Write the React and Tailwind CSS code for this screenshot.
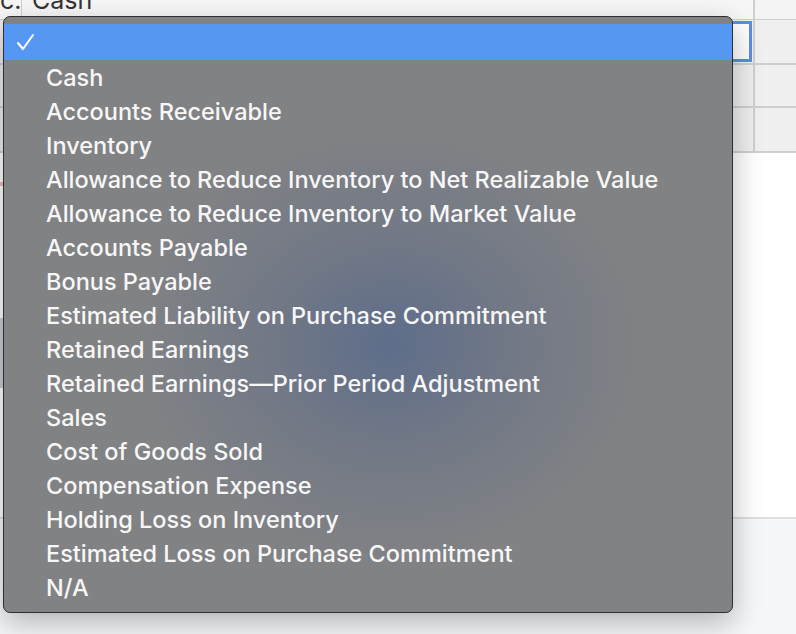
const options = [
    "Cash",
    "Accounts Receivable",
    "Inventory",
    "Allowance to Reduce Inventory to Net Realizable Value",
    "Allowance to Reduce Inventory to Market Value",
    "Accounts Payable",
    "Bonus Payable",
    "Estimated Liability on Purchase Commitment",
    "Retained Earnings",
    "Retained Earnings\u2014Prior Period Adjustment",
    "Sales",
    "Cost of Goods Sold",
    "Compensation Expense",
    "Holding Loss on Inventory",
    "Estimated Loss on Purchase Commitment",
    "N/A",
];

const font = { fontFamily: 'Inter, "Noto Sans", sans-serif' };

const App = () => {
    return (
        <div className="relative w-[796px] h-[634px] overflow-hidden bg-white flex flex-col" style={font}>
            {/* <!-- table behind the menu --> */}
            <div className="flex h-[20px] border-b border-[#cfcfcf] bg-[#f7f7f7]">
                <div className="w-[22px] border-r border-[#d0d0d0] overflow-hidden">
                    <div className="-mt-[15px] text-[25px] leading-[30px] text-[#333]">c.</div>
                </div>
                <div className="flex-1 overflow-hidden pl-[10px]">
                    <div className="-mt-[15px] text-[25px] leading-[30px] text-[#333]">Cash</div>
                </div>
                <div className="w-[43px] border-l-2 border-[#cfcfcf] bg-[#f4f4f4]"></div>
            </div>
            <div className="flex h-[45px] border-b-2 border-[#cfcfcf]">
                <div className="w-[22px] bg-[#ececec]"></div>
                <div className="flex-1 flex items-center bg-[#f2f2f2]">
                    <div className="ml-auto mr-[1px] w-[200px] h-[41px] border-[3px] border-[#5b8fe3] bg-white"></div>
                </div>
                <div className="w-[43px] border-l-2 border-[#cfcfcf] bg-[#f0f0f0]"></div>
            </div>
            <div className="flex h-[43px] border-b-2 border-[#cfcfcf]">
                <div className="w-[22px] bg-[#ececec]"></div>
                <div className="flex-1 bg-[#efefef]"></div>
                <div className="w-[43px] border-l-2 border-[#cfcfcf] bg-[#f0f0f0]"></div>
            </div>
            <div className="flex h-[45px] border-b-2 border-[#cfcfcf]">
                <div className="w-[22px] bg-[#ececec]"></div>
                <div className="flex-1 bg-[#efefef]"></div>
                <div className="w-[43px] border-l-2 border-[#cfcfcf] bg-[#f0f0f0]"></div>
            </div>
            <div className="flex-1 flex flex-col">
                <div className="h-[29px]"></div>
                <div className="w-[3px] h-[4px] bg-[#f3b8b8]"></div>
                <div className="h-[132px]"></div>
                <div className="w-[3px] h-[70px] bg-[#c6cdd5]"></div>
            </div>
            <div className="h-[117px] border-t-2 border-[#dedede] bg-[#f6f7f9]"></div>

            {/* <!-- open select menu --> */}
            <div className="absolute left-[3px] top-[16px] w-[730px] h-[597px] rounded-[7px] border border-[#2f2f2f] overflow-hidden shadow-[0_10px_30px_rgba(0,0,0,0.28)] bg-[#818181] bg-[radial-gradient(ellipse_260px_220px_at_53%_55%,#5e6d8a_0%,#717886_45%,#818284_100%)]">
                <div className="pt-[7px] pb-[8px] flex flex-col">
                    <div className="h-[36px] bg-[#5797f4] flex items-center pl-[12px]">
                        <svg width="19" height="18" viewBox="0 0 19 18">
                            <polyline points="2,10 7,16 17,2" fill="none" stroke="white" strokeWidth="2.1" strokeLinecap="round" strokeLinejoin="round" />
                        </svg>
                    </div>
                    {options.map((o) => (
                        <div key={o} className="h-[34px] flex items-center pt-[2px] pl-[42px] text-[23.5px] font-medium text-[#f7f7f7] whitespace-nowrap">
                            {o}
                        </div>
                    ))}
                </div>
            </div>
        </div>
    );
};

export default App;
